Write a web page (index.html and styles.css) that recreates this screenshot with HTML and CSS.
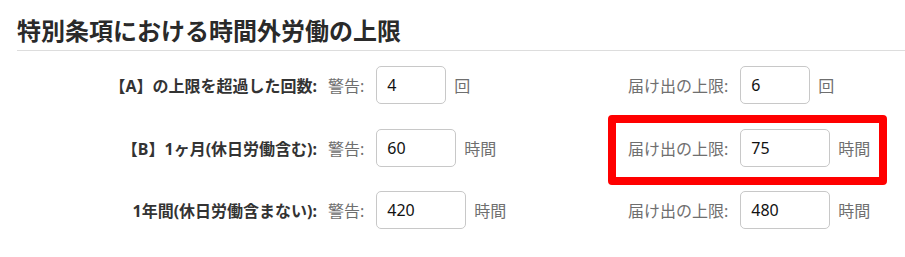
FILE: index.html
```html
<!DOCTYPE html>
<html lang="ja">
<head>
<meta charset="utf-8">
<title>特別条項における時間外労働の上限</title>
<link rel="stylesheet" href="styles.css">
</head>
<body>
<div class="page">
  <h2 class="title">特別条項における時間外労働の上限</h2>
  <div class="rows">
    <div class="row">
      <div class="label">【A】の上限を超過した回数:</div>
      <div class="field">
        <span class="cap">警告:</span>
        <input class="num w70" type="text" value="4">
        <span class="unit">回</span>
      </div>
      <div class="field right">
        <span class="cap">届け出の上限:</span>
        <input class="num w70" type="text" value="6">
        <span class="unit">回</span>
      </div>
    </div>
    <div class="row">
      <div class="label">【B】1ヶ月(休日労働含む):</div>
      <div class="field">
        <span class="cap">警告:</span>
        <input class="num w80" type="text" value="60">
        <span class="unit">時間</span>
      </div>
      <div class="field right">
        <span class="cap">届け出の上限:</span>
        <input class="num w90" type="text" value="75">
        <span class="unit">時間</span>
        <div class="highlight"></div>
      </div>
    </div>
    <div class="row">
      <div class="label">1年間(休日労働含まない):</div>
      <div class="field">
        <span class="cap">警告:</span>
        <input class="num w90" type="text" value="420">
        <span class="unit">時間</span>
      </div>
      <div class="field right">
        <span class="cap">届け出の上限:</span>
        <input class="num w90" type="text" value="480">
        <span class="unit">時間</span>
      </div>
    </div>
  </div>
</div>
</body>
</html>
```

FILE: styles.css
```css
html, body {
  margin: 0;
  padding: 0;
  background: #fff;
}

body {
  font-family: "Noto Sans", "Noto Sans CJK JP", sans-serif;
  color: #333;
}

.page {
  padding-left: 17px;
}

.title {
  margin: 0;
  padding: 14px 0 2px 0;
  font-size: 24px;
  line-height: 34px;
  font-weight: bold;
  color: #2a2a2a;
  border-bottom: 1px solid #ddd;
}

.rows {
  display: flex;
  flex-direction: column;
  row-gap: 24.5px;
  margin-top: 15px;
}

.row {
  display: grid;
  grid-template-columns: 300px 311px auto;
  height: 38px;
  align-items: center;
}

.label {
  text-align: right;
  font-size: 16px;
  font-weight: bold;
  color: #333;
  white-space: nowrap;
}

.field {
  display: flex;
  align-items: center;
  gap: 8px;
  padding-left: 11px;
  height: 38px;
}

.field.right {
  position: relative;
  padding-left: 0;
}

.cap,
.unit {
  font-size: 16px;
  color: #6f6f6f;
  white-space: nowrap;
}

.cap {
  margin-right: 4px;
}

.num {
  box-sizing: border-box;
  height: 38px;
  margin: 0;
  padding: 0 10px;
  border: 1px solid #c8c8c8;
  border-radius: 5px;
  font-family: "Noto Sans", "Noto Sans CJK JP", sans-serif;
  font-size: 16px;
  color: #111;
  background: #fff;
  outline: none;
}

.w70 { width: 70px; }
.w80 { width: 80px; }
.w90 { width: 90px; }

.highlight {
  position: absolute;
  left: -20px;
  top: -14px;
  width: 279px;
  height: 70px;
  box-sizing: border-box;
  border: 8px solid #ff0000;
  border-radius: 4px;
  pointer-events: none;
}
```
